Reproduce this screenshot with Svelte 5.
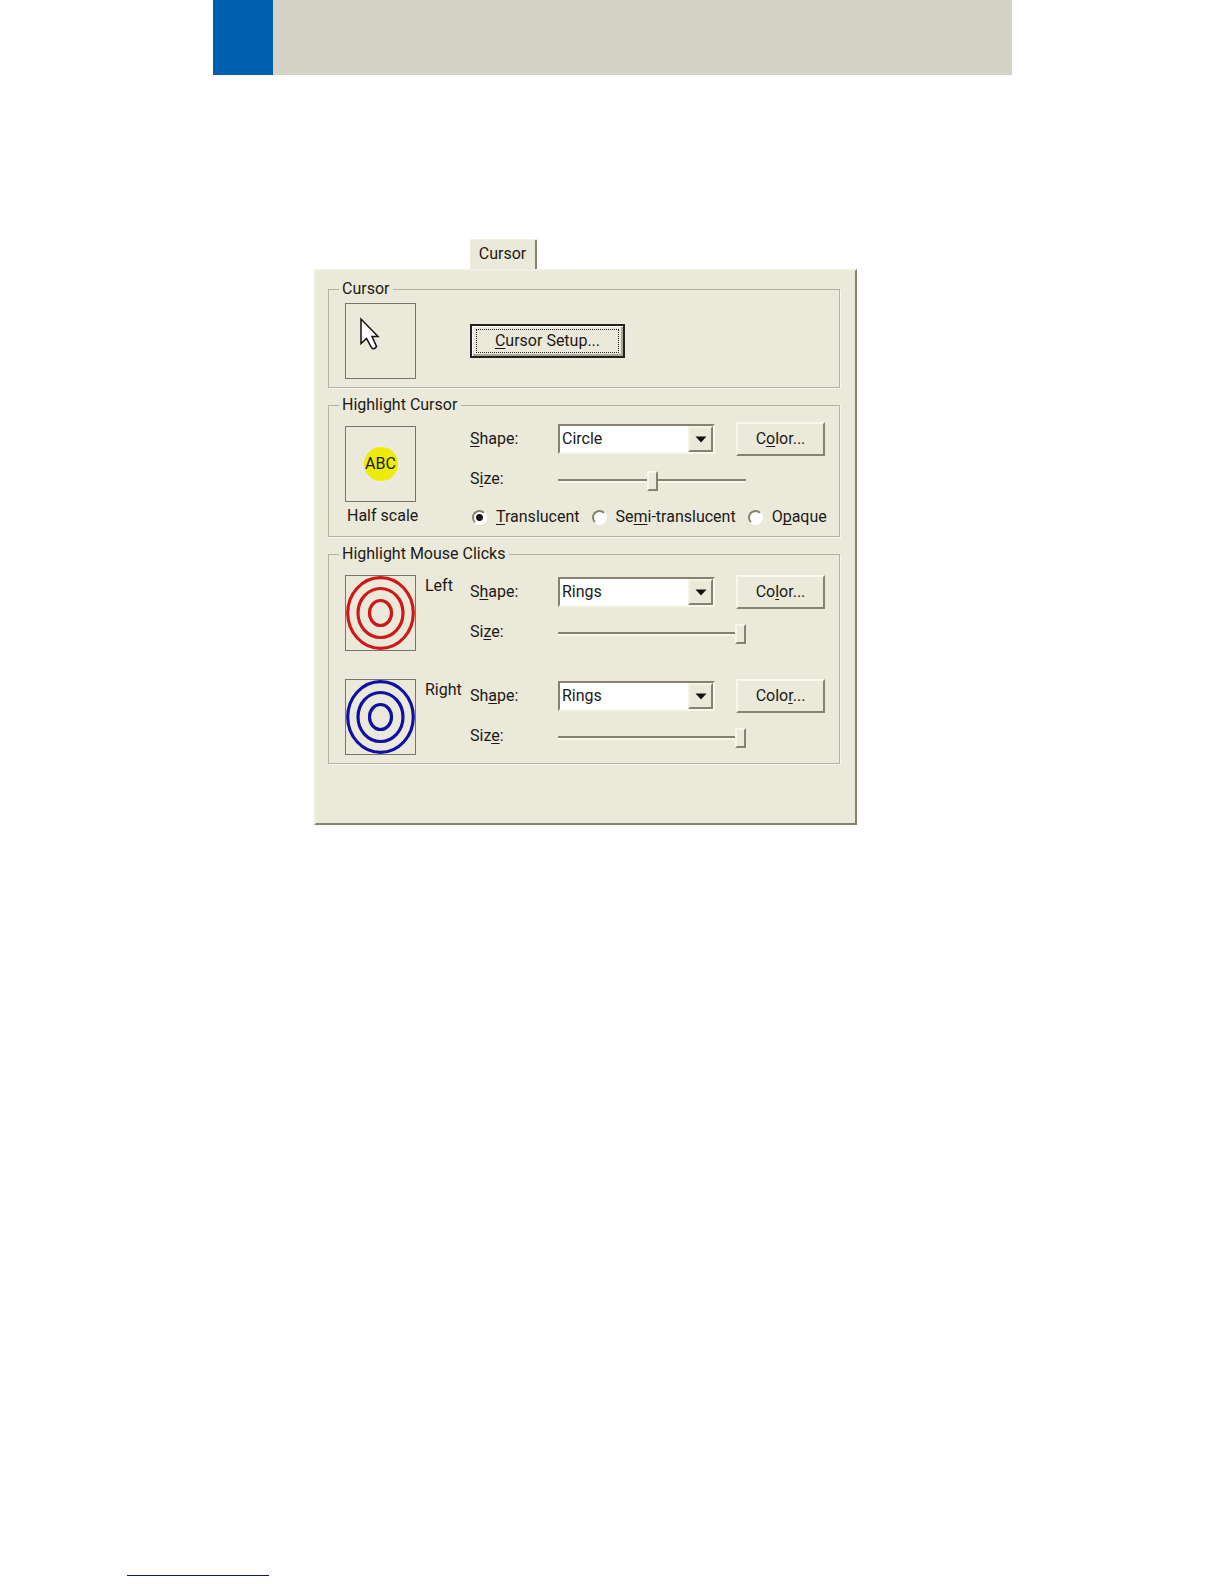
<script>
  let highlight = $state({ shape: 'Circle', size: 50, opacity: 'translucent' });

  const opacities = [
    { id: 'translucent', pre: '', key: 'T', post: 'ranslucent' },
    { id: 'semi', pre: 'Se', key: 'm', post: 'i-translucent' },
    { id: 'opaque', pre: 'O', key: 'p', post: 'aque' }
  ];

  let clicks = $state([
    { id: 'left', name: 'Left', ring: '#d01818', shape: 'Rings', size: 100, shapeKey: ['S', 'h', 'ape:'], sizeKey: ['Si', 'z', 'e:'], colorKey: ['Co', 'l', 'or...'] },
    { id: 'right', name: 'Right', ring: '#1010a8', shape: 'Rings', size: 100, shapeKey: ['Sh', 'a', 'pe:'], sizeKey: ['Siz', 'e', ':'], colorKey: ['Colo', 'r', '...'] }
  ]);
</script>

{#snippet mnemonic(parts)}{parts[0]}<u>{parts[1]}</u>{parts[2]}{/snippet}

{#snippet arrow()}
  <span class="drop" aria-hidden="true">
    <svg width="12" height="7" viewBox="0 0 12 7"><path d="M0.5 0.5H11.5L6 6.5Z" fill="#111" /></svg>
  </span>
{/snippet}

<div class="page">
  <header class="banner"><span class="accent"></span></header>

  <main class="dialog">
    <div class="tabs" role="tablist">
      <button class="tab" role="tab" aria-selected="true">Cursor</button>
    </div>

    <form class="panel" onsubmit={(e) => e.preventDefault()}>
      <fieldset>
        <legend>Cursor</legend>
        <div class="row middle">
          <div class="preview">
            <svg viewBox="0 0 69 74" width="69" height="74">
              <path d="M15 15V39.5L20.5 34.5L25.5 43.5Q28 46.5 30.5 42.5L26 32.5H32Z" fill="#fff" stroke="#111" stroke-width="1.5" />
            </svg>
          </div>
          <button type="button" class="push default"><span class="focus">{@render mnemonic(['', 'C', 'ursor Setup...'])}</span></button>
        </div>
      </fieldset>

      <fieldset>
        <legend>Highlight Cursor</legend>
        <div class="row">
          <div class="sample">
            <div class="preview"><span class="spot">ABC</span></div>
            <span class="caption">Half scale</span>
          </div>
          <div class="fields">
            <label for="hl-shape">{@render mnemonic(['', 'S', 'hape:'])}</label>
            <span class="combo">
              <select id="hl-shape" bind:value={highlight.shape}>
                <option>Circle</option>
                <option>Square</option>
              </select>
              {@render arrow()}
            </span>
            <button type="button" class="push">{@render mnemonic(['C', 'o', 'lor...'])}</button>

            <label class="size" for="hl-size">{@render mnemonic(['S', 'i', 'ze:'])}</label>
            <input class="slider" id="hl-size" type="range" bind:value={highlight.size} />

            <div class="radios">
              {#each opacities as o}
                <label>
                  <input type="radio" name="opacity" value={o.id} bind:group={highlight.opacity} />
                  <span>{@render mnemonic([o.pre, o.key, o.post])}</span>
                </label>
              {/each}
            </div>
          </div>
        </div>
      </fieldset>

      <fieldset>
        <legend>Highlight Mouse Clicks</legend>
        <div class="stack">
          {#each clicks as c (c.id)}
            <div class="row">
              <div class="side">
                <div class="preview">
                  <svg viewBox="0 0 69 74" width="69" height="74" fill="none" stroke={c.ring} stroke-width="3.2">
                    <ellipse cx="34.5" cy="37" rx="32.8" ry="35.4" />
                    <ellipse cx="34.5" cy="37" rx="22.5" ry="24.5" />
                    <ellipse cx="34.5" cy="37" rx="11" ry="12.5" />
                  </svg>
                </div>
                <span>{c.name}</span>
              </div>
              <div class="fields">
                <label for="{c.id}-shape">{@render mnemonic(c.shapeKey)}</label>
                <span class="combo">
                  <select id="{c.id}-shape" bind:value={c.shape}>
                    <option>Rings</option>
                    <option>Circle</option>
                  </select>
                  {@render arrow()}
                </span>
                <button type="button" class="push">{@render mnemonic(c.colorKey)}</button>

                <label class="size" for="{c.id}-size">{@render mnemonic(c.sizeKey)}</label>
                <input class="slider" id="{c.id}-size" type="range" bind:value={c.size} />
              </div>
            </div>
          {/each}
        </div>
      </fieldset>
    </form>
  </main>

  <footer><a href="#top" aria-label="Back to top"></a></footer>
</div>

<style>
  :global(body) {
    margin: 0;
    background: #fff;
  }
  .page {
    --face: #ebe9d9;
    --dark: #85826f;
    min-height: 100vh;
    display: flex;
    flex-direction: column;
    font: 16px/22px 'Roboto', sans-serif;
    color: #1c1a18;
  }
  .page * {
    box-sizing: border-box;
  }
  button,
  select {
    font: inherit;
    color: inherit;
  }
  u {
    text-decoration-thickness: 1px;
    text-underline-offset: 2px;
    text-decoration-skip-ink: none;
  }

  .banner {
    display: flex;
    height: 75px;
    margin: 0 212px 0 213px;
    background: #d3d3c6;
  }
  .accent {
    width: 60px;
    background: #0060b0;
  }

  .dialog {
    width: 543px;
    max-width: 100%;
    margin: 164px 0 0 314px;
  }
  .tabs {
    display: flex;
    padding-left: 156px;
  }
  .tab {
    height: 30px;
    width: 67px;
    padding: 0 0 1px;
    border: 0;
    border-top: 1px solid #f4f2e6;
    border-right: 2px solid var(--dark);
    border-top-right-radius: 2px;
    background: var(--face);
  }
  .panel {
    display: flex;
    flex-direction: column;
    gap: 6px;
    padding: 7px 15px 59px 12px;
    border: 2px solid var(--dark);
    border-top-color: #f1efe3;
    border-left-color: #f1efe3;
    background: var(--face);
  }

  fieldset {
    min-width: 0;
    margin: 0;
    padding: 3px 14px 8px 16px;
    border: 1px solid #b3b1a2;
    box-shadow: 1px 1px 0 #f8f7ee;
  }
  legend {
    margin-left: -6px;
    padding: 0 4px 0 3px;
    background: var(--face);
  }
  .row {
    display: grid;
    grid-template-columns: 125px 1fr;
    align-items: start;
  }
  .middle {
    align-items: center;
  }
  .stack {
    display: grid;
    gap: 28px;
    padding: 7px 0 0;
  }
  .preview {
    display: flex;
    align-items: center;
    justify-content: center;
    width: 71px;
    height: 76px;
    border: 1px solid #77756b;
  }
  .spot {
    display: flex;
    align-items: center;
    justify-content: center;
    width: 34px;
    height: 34px;
    border-radius: 50%;
    background: #ecec08;
  }
  .sample {
    display: grid;
    justify-items: start;
    padding-top: 7px;
  }
  .caption {
    padding: 3px 0 0 2px;
  }
  .side {
    display: flex;
    gap: 9px;
  }

  .fields {
    display: grid;
    grid-template-columns: 88px 178px 89px;
    align-items: center;
    row-gap: 15px;
  }
  .sample + .fields {
    padding-top: 3px;
  }
  .size {
    align-self: start;
    line-height: 16px;
  }
  .radios {
    grid-column: 1 / -1;
    display: flex;
    gap: 12px;
    padding-left: 2px;
    white-space: nowrap;
  }
  .radios label {
    display: flex;
    align-items: center;
    gap: 9px;
  }
  input[type='radio'] {
    appearance: none;
    width: 15px;
    height: 15px;
    margin: 0;
    border: 2px solid;
    border-color: var(--dark) #fff #fff var(--dark);
    border-radius: 50%;
    background: #fff;
  }
  input[type='radio']:checked {
    background: radial-gradient(circle, #111 0 3px, #fff 4px);
  }

  .push {
    height: 34px;
    padding: 0;
    border: 2px solid;
    border-color: #f8f7ec var(--dark) var(--dark) #f8f7ec;
    background: var(--face);
  }
  .default {
    justify-self: start;
    width: 155px;
    padding: 2px;
    border-color: #24221f;
    box-shadow: inset 1px 1px 0 #fff, inset -2px -2px 0 #aaa796;
  }
  .focus {
    display: flex;
    align-items: center;
    justify-content: center;
    height: 24px;
    margin: 0 2px;
    border: 1px dotted #24221f;
  }

  .combo {
    position: relative;
    width: 157px;
  }
  select {
    appearance: none;
    display: block;
    width: 100%;
    height: 30px;
    padding: 0 28px 0 2px;
    border: 2px solid;
    border-color: var(--dark) #f8f7ec #f8f7ec var(--dark);
    border-radius: 0;
    background: #fff;
  }
  .drop {
    position: absolute;
    top: 2px;
    right: 2px;
    bottom: 2px;
    width: 25px;
    display: flex;
    align-items: center;
    justify-content: center;
    border: 2px solid;
    border-color: #f4f2e6 var(--dark) var(--dark) #f4f2e6;
    background: var(--face);
    pointer-events: none;
  }

  .slider {
    appearance: none;
    grid-column: 2 / -1;
    width: 188px;
    height: 20px;
    margin: 0;
    background: transparent;
  }
  .slider::-webkit-slider-runnable-track {
    height: 4px;
    border-top: 2px solid var(--dark);
    border-bottom: 2px solid #f8f7ec;
  }
  .slider::-webkit-slider-thumb {
    appearance: none;
    width: 11px;
    height: 20px;
    margin-top: -10px;
    border: 2px solid;
    border-color: #f8f7ec var(--dark) var(--dark) #f8f7ec;
    background: var(--face);
  }

  footer {
    margin-top: auto;
    padding: 0 0 8px 127px;
  }
  footer a {
    display: block;
    width: 142px;
    border-bottom: 1px solid #16166e;
  }
</style>
